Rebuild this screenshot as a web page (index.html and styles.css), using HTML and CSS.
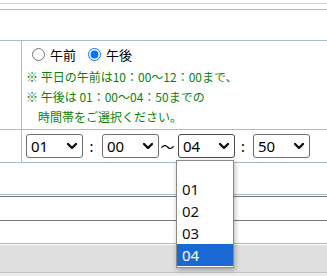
FILE: index.html
```html
<!DOCTYPE html>
<html>

<head>
    <title>時間帯の選択</title>
    <link rel="stylesheet" href="styles.css">
</head>

<body>
    <div class="prev-row"></div>
    <div class="thin-row"></div>
    <div class="blank-row"></div>

    <div class="form-row time-row">
        <div class="label-cell"></div>
        <div class="value-cell">
            <div class="radios">
                <input type="radio" name="ampm" id="am" />
                <label for="am">午前</label>
                <input type="radio" name="ampm" id="pm" class="second" checked />
                <label for="pm">午後</label>
            </div>
            <div class="notes">
                <p>※ 平日の午前は10：00～12：00まで、</p>
                <p>※ 午後は 01：00～04：50までの</p>
                <p class="indent">時間帯をご選択ください。</p>
            </div>
        </div>
    </div>

    <div class="form-row select-row">
        <div class="label-cell"></div>
        <div class="value-cell selects">
            <div class="select-wrap">
                <select id="start-hour">
                    <option></option>
                    <option selected>01</option>
                    <option>02</option>
                    <option>03</option>
                    <option>04</option>
                </select>
                <svg class="chevron" width="10" height="6" viewBox="0 0 10 6"><polyline points="1,1 5,5 9,1" /></svg>
            </div>
            <span class="sep">:</span>
            <div class="select-wrap">
                <select id="start-minute">
                    <option selected>00</option>
                    <option>10</option>
                    <option>20</option>
                    <option>30</option>
                    <option>40</option>
                    <option>50</option>
                </select>
                <svg class="chevron" width="10" height="6" viewBox="0 0 10 6"><polyline points="1,1 5,5 9,1" /></svg>
            </div>
            <span class="sep tilde">～</span>
            <div class="select-wrap">
                <select id="end-hour" class="open">
                    <option></option>
                    <option>01</option>
                    <option>02</option>
                    <option>03</option>
                    <option selected>04</option>
                </select>
                <svg class="chevron" width="10" height="6" viewBox="0 0 10 6"><polyline points="1,1 5,5 9,1" /></svg>
                <div class="dropdown">
                    <div class="option empty"></div>
                    <div class="option">01</div>
                    <div class="option">02</div>
                    <div class="option">03</div>
                    <div class="option active">04</div>
                </div>
            </div>
            <span class="sep last">:</span>
            <div class="select-wrap">
                <select id="end-minute">
                    <option>00</option>
                    <option>10</option>
                    <option>20</option>
                    <option>30</option>
                    <option>40</option>
                    <option selected>50</option>
                </select>
                <svg class="chevron" width="10" height="6" viewBox="0 0 10 6"><polyline points="1,1 5,5 9,1" /></svg>
            </div>
        </div>
    </div>

    <div class="gap-row"></div>
    <div class="input-row">
        <div class="input-box"></div>
    </div>
    <div class="footer-bar"></div>
    <div class="footer-rest"></div>
</body>

</html>
```

FILE: styles.css
```css
body {
    margin: 0;
    padding: 0;
    background-color: #fff;
    font-family: "Noto Sans CJK JP", "Noto Sans", sans-serif;
    overflow: hidden;
}

.prev-row {
    height: 3px;
    border-bottom: 1px solid #d6d6d6;
}

.thin-row {
    height: 5px;
    border-bottom: 1px solid #a9bccc;
}

.blank-row {
    height: 30px;
    border-bottom: 1px solid #a9bccc;
}

.form-row {
    display: flex;
    border-bottom: 1px solid #a9bccc;
}

.label-cell {
    width: 21px;
    border-right: 1px solid #a9bccc;
}

.value-cell {
    flex: 1;
    padding-left: 4px;
}

.time-row {
    height: 88px;
}

.radios {
    display: flex;
    align-items: center;
    height: 26px;
    font-size: 13px;
    color: #000;
}

.radios input {
    width: 13px;
    height: 13px;
    margin: 0 5px 0 6px;
}

.radios input.second {
    margin-left: 12px;
}

.notes {
    font-size: 12px;
    color: #0a820a;
}

.notes p {
    margin: 0;
    height: 20px;
    line-height: 20px;
}

.notes .indent {
    padding-left: 12px;
}

.select-row {
    height: 32px;
}

.selects {
    display: flex;
    align-items: flex-start;
    padding-top: 4px;
}

.select-wrap {
    position: relative;
    height: 24px;
}

.select-wrap select {
    appearance: none;
    -webkit-appearance: none;
    display: block;
    width: 57px;
    height: 24px;
    margin: 0;
    padding: 0 0 0 4px;
    border: 1px solid #6f6f6f;
    border-radius: 3px;
    background-color: #fff;
    font-family: "Noto Sans", sans-serif;
    font-size: 15px;
    color: #000;
}

.select-wrap select.open {
    border-color: #4a4a4a;
}

.chevron {
    position: absolute;
    top: 9px;
    right: 6px;
    pointer-events: none;
}

.chevron polyline {
    fill: none;
    stroke: #111;
    stroke-width: 2.4;
    stroke-linecap: round;
    stroke-linejoin: round;
}

.sep {
    width: 19px;
    padding-right: 2px;
    box-sizing: border-box;
    text-align: center;
    font-size: 14px;
    line-height: 24px;
}

.sep.last {
    width: 18px;
}

.dropdown {
    position: absolute;
    top: 26px;
    left: -2px;
    width: 58px;
    box-sizing: border-box;
    border: 1px solid #8a8a8a;
    background-color: #fff;
    box-shadow: 1px 2px 5px rgba(0, 0, 0, 0.3);
    padding-bottom: 1px;
    font-family: "Noto Sans", sans-serif;
    font-size: 15px;
    z-index: 2;
}

.dropdown .option {
    height: 22px;
    line-height: 22px;
    padding-left: 5px;
    color: #111;
}

.dropdown .option.empty {
    height: 17px;
}

.dropdown .option.active {
    background-color: #1a68d4;
    color: #fff;
}

.gap-row {
    height: 31px;
    border-bottom: 1px solid #a9bccc;
}

.input-row {
    padding: 1px 0 22px;
    border-bottom: 1px solid #a9bccc;
}

.input-box {
    height: 23px;
    border-top: 1px solid #777;
    border-bottom: 1px solid #777;
}

.footer-bar {
    margin-top: 1px;
    height: 27px;
    background-color: #dfdfdf;
    border-bottom: 1px solid #c4c4c4;
}

.footer-rest {
    height: 4px;
    background-color: #ececec;
}
```
